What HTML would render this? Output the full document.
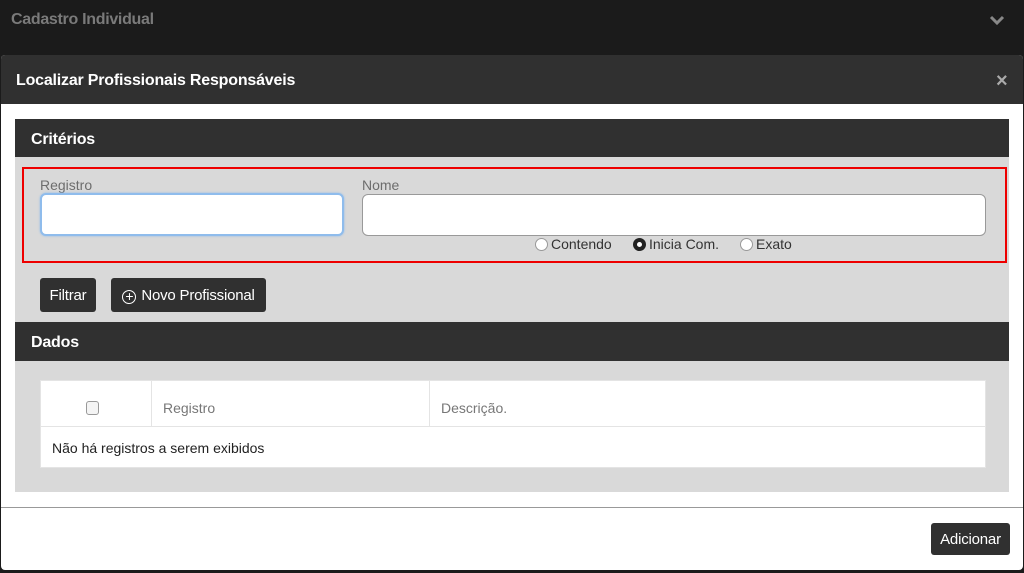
<!DOCTYPE html>
<html><head><meta charset="utf-8"><style>
*{box-sizing:border-box;margin:0;padding:0}
body{width:1024px;height:573px;background:#1b1b1b;font-family:"Liberation Sans",sans-serif;position:relative;overflow:hidden}
.abs{position:absolute}
.top{left:0;top:0;width:1024px;height:42px;background:#1b1b1b}
.top .t{left:11px;top:11px;color:#7a7a7a;font-weight:bold;font-size:16px;letter-spacing:-0.3px}
.modal{left:1px;top:55px;width:1022px;height:515px;background:#fff;border-radius:4px;overflow:hidden}
.mh{left:0;top:0;width:1022px;height:49px;background:#303030;color:#fff;font-weight:bold;font-size:16px;padding:17px 15px;letter-spacing:-0.2px}
.panel{left:14px;top:64px;width:994px;height:373px;background:#d9d9d9}
.ph{left:0;top:0;width:994px;height:38px;background:#303030;color:#fff;font-weight:bold;font-size:16px;padding:12px 16px;letter-spacing:-0.2px}
.red{left:7px;top:48px;width:985px;height:96px;border:2px solid #e00}
.lbl{color:#6d6d6d;font-size:14px}
.inp{background:#fff;border:1px solid #999;border-radius:6px;height:42px}
.btn{background:#303030;color:#fff;font-size:15px;border-radius:3px;height:34px;line-height:35px;padding:0;text-align:center;letter-spacing:-0.2px}
.radio{display:inline-block;width:13px;height:13px;border-radius:50%;background:#fff;border:1px solid #999;vertical-align:-2px;margin-right:3px}
.rl{font-size:14px;color:#333}
</style></head><body>
<div class="abs top"><div class="abs t">Cadastro Individual</div>
<svg class="abs" style="left:989px;top:15px" width="16" height="10"><path d="M2 2 L8 8 L14 2" stroke="#888" stroke-width="3" fill="none"/></svg></div>
<div class="abs modal">
<div class="abs mh">Localizar Profissionais Responsáveis</div>
<div class="abs" style="left:995px;top:15px;color:#aaa;font-weight:bold;font-size:20px">×</div>
<div class="abs panel">
<div class="abs ph">Critérios</div>
<div class="abs red"></div>
<div class="abs lbl" style="left:25px;top:58px">Registro</div>
<div class="abs inp" style="left:25px;top:74px;width:304px;border:2px solid #8fbcec;box-shadow:0 0 2px #8fbcec;height:43px"></div>
<div class="abs lbl" style="left:347px;top:58px">Nome</div>
<div class="abs inp" style="left:347px;top:75px;width:624px"></div>
<div class="abs rl" style="left:520px;top:117px"><span class="radio"></span>Contendo</div>
<div class="abs rl" style="left:618px;top:117px"><span class="radio" style="border:4px solid #222"></span>Inicia Com.</div>
<div class="abs rl" style="left:725px;top:117px"><span class="radio"></span>Exato</div>
<div class="abs btn" style="left:25px;top:159px;width:56px">Filtrar</div>
<div class="abs btn" style="left:96px;top:159px;width:155px"><span style="display:inline-block;width:14px;height:14px;border:1px solid #fff;border-radius:50%;text-align:center;line-height:11px;font-size:14px;vertical-align:-1px;margin-right:5px">+</span>Novo Profissional</div>
<div class="abs ph" style="top:203px;height:39px">Dados</div>
<div class="abs" style="left:25px;top:261px;width:946px;height:88px;background:#fff;border:1px solid #e4e4e4">
<div class="abs" style="left:0;top:0;width:944px;height:46px;border-bottom:1px solid #e4e4e4"></div>
<div class="abs" style="left:110px;top:0;width:1px;height:46px;background:#e4e4e4"></div>
<div class="abs" style="left:388px;top:0;width:1px;height:46px;background:#e4e4e4"></div>
<div class="abs" style="left:45px;top:20px;width:13px;height:14px;border:1px solid #999;border-radius:3px;background:#f4f4f4"></div>
<div class="abs" style="left:122px;top:19px;font-size:14px;color:#777">Registro</div>
<div class="abs" style="left:400px;top:19px;font-size:14px;color:#777">Descrição.</div>
<div class="abs" style="left:11px;top:59px;font-size:14px;color:#222">Não há registros a serem exibidos</div>
</div>
</div>
<div class="abs" style="left:0;top:452px;width:1022px;height:1px;background:#999"></div>
<div class="abs btn" style="left:930px;top:468px;width:79px;height:32px;line-height:33px;font-size:15px">Adicionar</div>
</div>
</body></html>
